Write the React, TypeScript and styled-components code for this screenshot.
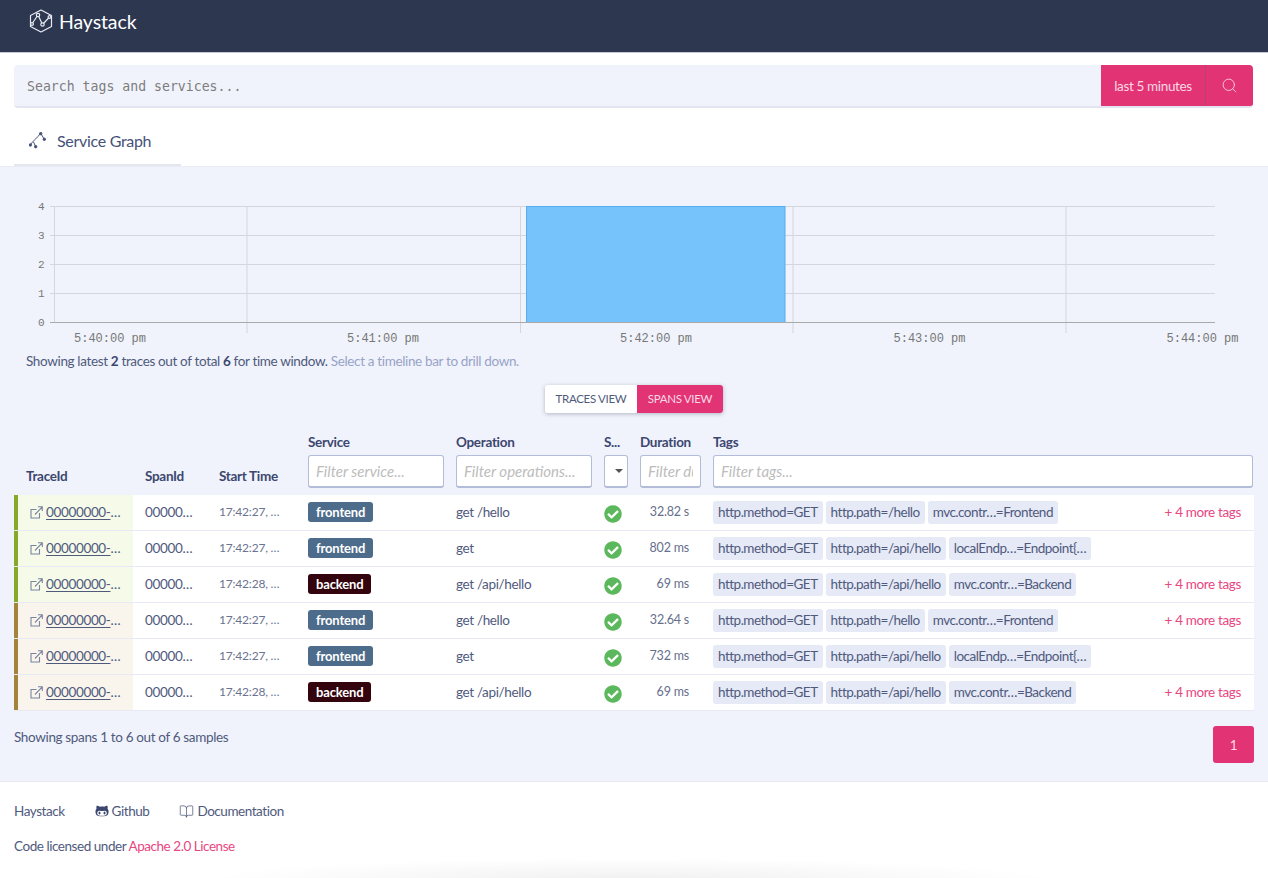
import React from 'react';
import styled, { createGlobalStyle } from 'styled-components';
import { FaCheckCircle, FaGithubAlt } from 'react-icons/fa';
import { BookOpen, Search } from 'lucide-react';

const Global = createGlobalStyle`
  html, body { margin: 0; padding: 0; background: #fff; }
  body { font-family: Lato, "Open Sans", sans-serif; font-size: 13.5px; letter-spacing: -0.35px; color: #4f5a7d; overflow: hidden; }
  * { box-sizing: border-box; }
`;

const Page = styled.div`
  position: relative;
  width: 1268px;
  height: 878px;
  overflow: hidden;
`;

const Header = styled.header`
  height: 53px;
  background: #2d3750;
  border-bottom: 1px solid #c5cad6;
  display: flex;
  align-items: center;
  padding: 0 0 10px 29px;
  gap: 6px;
  color: #fff;
`;
const Brand = styled.span`
  font-size: 19.5px;
  letter-spacing: -0.1px;
`;

const SearchRow = styled.div`
  margin: 12px 15px 0 14px;
  height: 43px;
  display: flex;
  border-radius: 4px;
  overflow: hidden;
  background: #f0f3fb;
  border-bottom: 2px solid #e2e5ef;
`;
const SearchInput = styled.input`
  flex: 1;
  border: 0;
  outline: 0;
  background: transparent;
  padding: 2px 13px 0;
  font-family: "DejaVu Sans Mono", monospace;
  font-size: 13.2px;
  letter-spacing: 0;
  &::placeholder { color: #7d7d7d; opacity: 1; }
`;
const TimeButton = styled.div`
  width: 105px;
  margin-bottom: -2px;
  padding-bottom: 2px;
  background: #e23474;
  color: #fbd8e5;
  display: flex;
  align-items: center;
  justify-content: center;
  border-right: 1px solid #b0446f;
`;
const SearchButton = styled.div`
  width: 47px;
  margin-bottom: -2px;
  background: #e23474;
  color: #fbd8e5;
  display: flex;
  align-items: center;
  justify-content: center;
  padding-bottom: 2px;
`;

const TabBar = styled.nav`
  height: 59px;
  padding: 12px 14px 0;
  border-bottom: 1px solid #e9ecf4;
`;
const Tab = styled.div`
  width: 167px;
  height: 46px;
  display: flex;
  align-items: center;
  gap: 11px;
  padding: 0 0 4px 15px;
  font-size: 16px;
  letter-spacing: -0.3px;
  color: #46517a;
  border-bottom: 2px solid #e3e6ef;
`;

const Main = styled.main`
  height: 615px;
  background: #f0f3fb;
  padding: 23px 14px 0;
  border-bottom: 1px solid #e7eaf3;
`;
const Chart = styled.svg`
  display: block;
  width: 1240px;
  height: 158px;
`;
const Summary = styled.p`
  margin: 3px 0 0 12px;
  height: 20px;
  line-height: 20px;
  b { font-weight: 700; color: #3c4770; }
`;
const Hint = styled.span`
  color: #98a3c8;
`;
const Toggle = styled.div`
  display: flex;
  width: 178px;
  height: 28px;
  margin: 14px auto 0;
  border-radius: 3px;
  overflow: hidden;
  box-shadow: 0 1px 4px rgba(60, 70, 100, .35);
`;
const ToggleItem = styled.div<{ $active?: boolean }>`
  flex: ${p => (p.$active ? '0 0 86px' : '1')};
  display: flex;
  align-items: center;
  justify-content: center;
  padding-bottom: 2px;
  font-size: 11.5px;
  letter-spacing: -0.3px;
  background: ${p => (p.$active ? '#e23474' : '#fff')};
  color: ${p => (p.$active ? '#fbd8e5' : '#4f5a7d')};
`;

const COLS = '119px 74px 89px 148px 148px 36px 73px 552px';

const HeadRow = styled.div`
  display: grid;
  grid-template-columns: ${COLS};
  height: 66px;
  margin-top: 16px;
  align-items: end;
  padding-bottom: 7px;
`;
const HeadCell = styled.div`
  padding-left: 12px;
`;
const HeadLabel = styled.div<{ $stack?: boolean }>`
  font-weight: 700;
  font-size: 13.5px;
  letter-spacing: -0.3px;
  color: #3c4770;
  white-space: nowrap;
  line-height: 16px;
  margin-bottom: ${p => (p.$stack ? '5px' : '4px')};
`;
const FilterInput = styled.input`
  display: block;
  width: 100%;
  height: 33px;
  padding: 0 7px;
  background: #fff;
  border: 1px solid #b3bcd9;
  border-bottom-width: 2px;
  border-radius: 3px;
  outline: 0;
  font-family: Lato, sans-serif;
  font-size: 15px;
  letter-spacing: 0;
  font-style: italic;
  &::placeholder { color: #bcbcbc; opacity: 1; }
`;
const FilterSelect = styled.div`
  height: 33px;
  background: #fff;
  border: 1px solid #b3bcd9;
  border-bottom-width: 2px;
  border-radius: 3px;
  display: flex;
  align-items: center;
  justify-content: flex-end;
  padding-right: 4px;
  &::after {
    content: '';
    border-left: 4px solid transparent;
    border-right: 4px solid transparent;
    border-top: 4px solid #555;
  }
`;

const Row = styled.div`
  display: grid;
  grid-template-columns: ${COLS};
  height: 36px;
  background: #fff;
  border-bottom: 1px solid #e7eaf4;
  align-items: stretch;
`;
const TraceCell = styled.div<{ $bar: string; $tint: string }>`
  background: ${p => p.$tint};
  border-left: 4px solid ${p => p.$bar};
  display: flex;
  align-items: center;
  padding: 0 0 1px 12px;
  gap: 3px;
  color: #7a84a0;
`;
const TraceLink = styled.span`
  color: #4f5a7d;
  u { text-underline-offset: 2px; }
`;
const Cell = styled.div`
  display: flex;
  align-items: center;
  padding-left: 12px;
  white-space: nowrap;
  min-width: 0;
`;
const TextCell = styled(Cell)`
  padding-bottom: 2px;
`;
const TimeText = styled.span`
  font-size: 12px;
  letter-spacing: -0.2px;
  color: #6a7390;
`;
const Badge = styled.span<{ $bg: string }>`
  display: inline-flex;
  align-items: center;
  height: 20px;
  padding: 0 8px;
  margin-top: -2px;
  background: ${p => p.$bg};
  color: #fff;
  border-radius: 3px;
  font-size: 13px;
  font-weight: 700;
  letter-spacing: -0.15px;
`;
const StatusCell = styled(Cell)`
  color: #5cb85c;
  padding-top: 2px;
`;
const DurationCell = styled(TextCell)`
  justify-content: flex-end;
  padding-right: 12px;
  padding-left: 0;
  font-size: 12.5px;
  letter-spacing: -0.2px;
  color: #666f8c;
`;
const TagsCell = styled(Cell)`
  justify-content: space-between;
  padding-right: 12px;
`;
const TagList = styled.div`
  display: flex;
  gap: 3px;
`;
const Tag = styled.span`
  height: 23px;
  line-height: 22px;
  padding: 0 5px;
  background: #e6e9f6;
  border-radius: 3px;
  letter-spacing: -0.5px;
`;
const MoreTags = styled.span`
  color: #e8467f;
  padding-bottom: 1px;
`;

const PagerRow = styled.div`
  display: flex;
  justify-content: space-between;
  align-items: flex-start;
  margin-top: 15px;
`;
const PagerText = styled.span`
  line-height: 22px;
`;
const PagerButton = styled.div`
  width: 41px;
  height: 37px;
  background: #e23474;
  color: #fbd8e5;
  border-radius: 3px;
  display: flex;
  align-items: center;
  justify-content: center;
`;

const Footer = styled.footer`
  padding: 19px 14px 0;
  letter-spacing: -0.45px;
`;
const FooterLinks = styled.div`
  display: flex;
  align-items: center;
  height: 20px;
`;
const FooterLink = styled.span<{ $gap: number }>`
  display: inline-flex;
  align-items: center;
  gap: 3px;
  margin-right: ${p => p.$gap}px;
`;
const License = styled.p`
  margin: 15px 0 0;
  line-height: 20px;
  a { color: #e8467f; text-decoration: none; }
`;
const BottomGlow = styled.div`
  position: absolute;
  left: 200px;
  bottom: -24px;
  width: 860px;
  height: 44px;
  background: radial-gradient(ellipse at center, rgba(0,0,0,.06), rgba(0,0,0,0) 70%);
  pointer-events: none;
`;

const Logo = () => (
  <svg width="24" height="24" viewBox="0 0 24 24" fill="none" stroke="#e8ebf3" strokeWidth="1.2" strokeLinejoin="round">
    <path d="M12 1 22.500 6.500V17.500L12 23 1.500 17.500V6.500Z" />
    <path d="M2.500 15.500 9 6 13.500 15.500 21 7.500" />
    <circle cx="9" cy="6" r="1.700" fill="#2d3750" />
    <circle cx="13.500" cy="15.500" r="1.700" fill="#2d3750" />
    <circle cx="20.500" cy="8" r="1.400" fill="#2d3750" />
    <circle cx="3" cy="15" r="1.400" fill="#2d3750" />
  </svg>
);

const GraphIcon = () => (
  <svg width="17" height="17" viewBox="0 0 17 17" fill="none" stroke="#46517a" strokeWidth="1">
    <path d="M1 13C4 9 8 6 11.700 1.300L15.300 7.300M4.500 10 6.700 14.700" />
    <circle cx="1.300" cy="13" r="1.200" fill="#46517a" />
    <circle cx="11.700" cy="1.600" r="1.200" fill="#46517a" />
    <circle cx="15.300" cy="7.300" r="1.200" fill="#46517a" />
    <circle cx="6.700" cy="14.700" r="1.200" fill="#46517a" />
  </svg>
);

const LinkIcon = () => (
  <svg width="13" height="13" viewBox="0 0 13 13" fill="none" stroke="currentColor" strokeWidth="1.1" style={{ flex: 'none' }}>
    <path d="M9.500 7v5H1V3.500h5.500M5 8.500 12 1.200M8 .8h4.300V5" />
  </svg>
);

const TICKS_Y = [
  { label: '4', y: 16.5 },
  { label: '3', y: 45.5 },
  { label: '2', y: 74.5 },
  { label: '1', y: 103.500 },
];
const V_LINES = [233, 506.500, 779, 1052];
const X_LABELS = [
  { x: 96, t: '5:40:00 pm' },
  { x: 369, t: '5:41:00 pm' },
  { x: 642, t: '5:42:00 pm' },
  { x: 915.500, t: '5:43:00 pm' },
  { x: 1188.500, t: '5:44:00 pm' },
];

const Timeline = () => (
  <Chart viewBox="0 0 1240 158">
    {TICKS_Y.map(t => (
      <line key={t.label} x1="36" x2="1201" y1={t.y} y2={t.y} stroke="#d4d6dd" />
    ))}
    <line x1="40.500" x2="40.500" y1="16" y2="132" stroke="#d4d6dd" />
    {V_LINES.map(x => (
      <line key={x} x1={x} x2={x} y1="16" y2="143" stroke="#d4d6dd" />
    ))}
    <rect x="512.500" y="16.500" width="258.500" height="116" fill="#75c3fa" stroke="#55adf0" />
    <line x1="36" x2="1201" y1="132.500" y2="132.500" stroke="#aaaaaa" />
    <g fontFamily="'Liberation Mono', monospace" fontSize="12" fill="#777" letterSpacing="0">
      {TICKS_Y.map(t => (
        <text key={t.label} x="24" y={t.y + 3.500} fontSize="11">{t.label}</text>
      ))}
      <text x="24" y="136" fontSize="11">0</text>
      {X_LABELS.map(l => (
        <text key={l.t} x={l.x} y="152" textAnchor="middle">{l.t}</text>
      ))}
    </g>
  </Chart>
);

const FRONT = '#4d6b8a';
const BACK = '#33030e';
const GREEN = { bar: '#85a928', tint: '#f5fae9' };
const BROWN = { bar: '#a3843a', tint: '#f9f5ec' };

const ROWS = [
  { c: GREEN, time: '17:42:27, …', svc: 'frontend', op: 'get /hello', dur: '32.82 s', path: '/hello', last: 'mvc.contr…=Frontend', more: true },
  { c: GREEN, time: '17:42:27, …', svc: 'frontend', op: 'get', dur: '802 ms', path: '/api/hello', last: 'localEndp…=Endpoint{…', more: false },
  { c: GREEN, time: '17:42:28, …', svc: 'backend', op: 'get /api/hello', dur: '69 ms', path: '/api/hello', last: 'mvc.contr…=Backend', more: true },
  { c: BROWN, time: '17:42:27, …', svc: 'frontend', op: 'get /hello', dur: '32.64 s', path: '/hello', last: 'mvc.contr…=Frontend', more: true },
  { c: BROWN, time: '17:42:27, …', svc: 'frontend', op: 'get', dur: '732 ms', path: '/api/hello', last: 'localEndp…=Endpoint{…', more: false },
  { c: BROWN, time: '17:42:28, …', svc: 'backend', op: 'get /api/hello', dur: '69 ms', path: '/api/hello', last: 'mvc.contr…=Backend', more: true },
];

export default function App() {
  return (
    <Page>
      <Global />
      <Header>
        <Logo />
        <Brand>Haystack</Brand>
      </Header>
      <SearchRow>
        <SearchInput placeholder="Search tags and services..." />
        <TimeButton>last 5 minutes</TimeButton>
        <SearchButton><Search size={17} strokeWidth={1.2} /></SearchButton>
      </SearchRow>
      <TabBar>
        <Tab><GraphIcon />Service Graph</Tab>
      </TabBar>
      <Main>
        <Timeline />
        <Summary>
          Showing latest <b>2</b> traces out of total <b>6</b> for time window. <Hint>Select a timeline bar to drill down.</Hint>
        </Summary>
        <Toggle>
          <ToggleItem>TRACES VIEW</ToggleItem>
          <ToggleItem $active>SPANS VIEW</ToggleItem>
        </Toggle>
        <HeadRow>
          <HeadCell><HeadLabel>TraceId</HeadLabel></HeadCell>
          <HeadCell><HeadLabel>SpanId</HeadLabel></HeadCell>
          <HeadCell><HeadLabel>Start Time</HeadLabel></HeadCell>
          <HeadCell><HeadLabel $stack>Service</HeadLabel><FilterInput placeholder="Filter service..." /></HeadCell>
          <HeadCell><HeadLabel $stack>Operation</HeadLabel><FilterInput placeholder="Filter operations..." /></HeadCell>
          <HeadCell><HeadLabel $stack>S...</HeadLabel><FilterSelect /></HeadCell>
          <HeadCell><HeadLabel $stack>Duration</HeadLabel><FilterInput placeholder="Filter duration..." /></HeadCell>
          <HeadCell><HeadLabel $stack>Tags</HeadLabel><FilterInput placeholder="Filter tags..." /></HeadCell>
        </HeadRow>
        {ROWS.map((r, i) => (
          <Row key={i}>
            <TraceCell $bar={r.c.bar} $tint={r.c.tint}>
              <LinkIcon />
              <TraceLink><u>00000000-</u>…</TraceLink>
            </TraceCell>
            <TextCell>00000…</TextCell>
            <TextCell><TimeText>{r.time}</TimeText></TextCell>
            <Cell><Badge $bg={r.svc === 'frontend' ? FRONT : BACK}>{r.svc}</Badge></Cell>
            <TextCell>{r.op}</TextCell>
            <StatusCell><FaCheckCircle size={18} /></StatusCell>
            <DurationCell>{r.dur}</DurationCell>
            <TagsCell>
              <TagList>
                <Tag>http.method=GET</Tag>
                <Tag>http.path={r.path}</Tag>
                <Tag>{r.last}</Tag>
              </TagList>
              {r.more && <MoreTags>+ 4 more tags</MoreTags>}
            </TagsCell>
          </Row>
        ))}
        <PagerRow>
          <PagerText>Showing spans 1 to 6 out of 6 samples</PagerText>
          <PagerButton>1</PagerButton>
        </PagerRow>
      </Main>
      <Footer>
        <FooterLinks>
          <FooterLink $gap={30}>Haystack</FooterLink>
          <FooterLink $gap={30}><FaGithubAlt size={14} color="#3c4770" />Github</FooterLink>
          <FooterLink $gap={0}><BookOpen size={15} strokeWidth={1.2} />Documentation</FooterLink>
        </FooterLinks>
        <License>Code licensed under <a href="#license">Apache 2.0 License</a></License>
      </Footer>
      <BottomGlow />
    </Page>
  );
}
